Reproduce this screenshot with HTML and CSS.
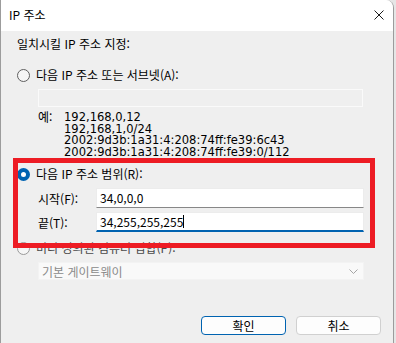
FILE: index.html
```html
<!DOCTYPE html>
<html lang="ko">
<head>
  <meta charset="UTF-8">
  <meta name="viewport" content="width=device-width, initial-scale=1.0">
  <title>IP 주소</title>
  <link rel="stylesheet" href="styles.css">
</head>
<body>
  <div class="window">
    <div class="titlebar">
      <span class="title">IP 주소</span>
      <svg class="close" width="10" height="10" viewBox="0 0 10 10">
        <path d="M0.5 0.5 L9.5 9.5 M9.5 0.5 L0.5 9.5" stroke="#1a1a1a" stroke-width="1" fill="none"/>
      </svg>
    </div>

    <div class="content">
      <div class="heading">일치시킬 IP 주소 지정:</div>

      <label class="radio-row">
        <span class="radio"></span>
        <span>다음 IP 주소 또는 서브넷(A):</span>
      </label>
      <div class="textbox disabled"></div>

      <div class="example">
        <span class="example-label">예:</span>
        <div class="example-lines">
          <div>192,168,0,12</div>
          <div>192,168,1,0/24</div>
          <div>2002:9d3b:1a31:4:208:74ff:fe39:6c43</div>
          <div>2002:9d3b:1a31:4:208:74ff:fe39:0/112</div>
        </div>
      </div>

      <label class="radio-row range-radio">
        <span class="radio checked"></span>
        <span>다음 IP 주소 범위(R):</span>
      </label>
      <div class="field-row first">
        <span class="field-label">시작(F):</span>
        <div class="input">34,0,0,0</div>
      </div>
      <div class="field-row">
        <span class="field-label">끝(T):</span>
        <div class="input focused">34,255,255,255<span class="caret"></span></div>
      </div>

      <label class="radio-row preset-radio">
        <span class="radio off"></span>
        <span class="muted">미리 정의된 컴퓨터 집합(P):</span>
      </label>
      <div class="combo">
        <span>기본 게이트웨이</span>
        <svg width="9" height="5" viewBox="0 0 9 5">
          <path d="M0.5 0.5 L4.5 4.5 L8.5 0.5" stroke="#a5a5a5" stroke-width="1" fill="none"/>
        </svg>
      </div>

      <div class="buttons">
        <button class="btn default">확인</button>
        <button class="btn">취소</button>
      </div>

      <div class="highlight"></div>
    </div>
  </div>
</body>
</html>
```

FILE: styles.css
```css
* {
  box-sizing: border-box;
  margin: 0;
  padding: 0;
}
body {
  width: 396px;
  height: 343px;
  overflow: hidden;
  background-color: #e6e6e6;
  font-family: "Noto Sans CJK KR", "Noto Sans", sans-serif;
  font-size: 12px;
  color: #000;
}
.window {
  width: 394px;
  height: 343px;
  background-color: #efefef;
  border-left: 1px solid #9c9c9c;
  border-right: 1px solid #9c9c9c;
  border-top-right-radius: 8px;
  overflow: hidden;
}
.titlebar {
  height: 31px;
  background-color: #fff;
  display: flex;
  justify-content: space-between;
  align-items: center;
  padding: 0 9px 0 8px;
}
.title {
  font-size: 12px;
  line-height: 16px;
  margin-top: -2px;
}
.close {
  margin-top: -1px;
}
.content {
  position: relative;
  height: 312px;
  padding-left: 16px;
}
.heading {
  height: 16px;
  line-height: 16px;
  margin-top: 5px;
}
.radio-row {
  display: flex;
  align-items: center;
  gap: 6px;
  height: 16px;
  line-height: 16px;
  margin-top: 15px;
}
.radio {
  width: 13px;
  height: 13px;
  border-radius: 50%;
  border: 1px solid #5f5f5f;
  background-color: #f6f6f6;
  flex-shrink: 0;
}
.radio.checked {
  border: 4px solid #0063b1;
  background-color: #fff;
}
.radio.off {
  border-color: #9a9a9a;
}
.muted {
  color: #4a4a4a;
}
.textbox {
  margin: 6px 0 0 21px;
  width: 325px;
  height: 18px;
  border: 1px solid #fafafa;
  background-color: #efefef;
}
.example {
  display: flex;
  margin: 4px 0 0 21px;
  font-family: "DejaVu Sans Condensed", "Noto Sans CJK KR", sans-serif;
  font-size: 12.8px;
  line-height: 11.7px;
  height: 46px;
}
.example-label {
  width: 26px;
  font-family: "Noto Sans CJK KR", sans-serif;
  font-size: 12px;
}
.range-radio {
  margin-top: 9px;
}
.field-row {
  display: flex;
  align-items: center;
  height: 20px;
  margin-top: 4px;
  padding-left: 21px;
}
.field-row.first {
  margin-top: 6px;
}
.field-label {
  width: 58px;
}
.input {
  width: 268px;
  height: 20px;
  background-color: #fff;
  border: 1px solid #ececec;
  border-bottom: 1px solid #878787;
  padding-left: 3px;
  line-height: 18px;
  display: flex;
  align-items: center;
}
.input.focused {
  border-bottom: 2px solid #0063b1;
}
.caret {
  width: 1px;
  height: 13px;
  background-color: #000;
}
.preset-radio {
  margin-top: 8px;
}
.combo {
  margin: 6px 0 0 21px;
  width: 326px;
  height: 18px;
  background-color: #f9f9f9;
  border: 1px solid #f3f3f3;
  color: #8a8a8a;
  display: flex;
  justify-content: space-between;
  align-items: center;
  padding: 0 5px 0 3px;
}
.buttons {
  display: flex;
  justify-content: flex-end;
  gap: 10px;
  margin-top: 36px;
  padding-right: 12px;
}
.btn {
  width: 85px;
  height: 19px;
  border: 1px solid #d0d0d0;
  border-radius: 4px;
  background-color: #fdfdfd;
  font-family: "Noto Sans CJK KR", sans-serif;
  font-size: 12px;
  line-height: 16px;
  color: #000;
}
.btn.default {
  border: 1px solid #0063b1;
}
.highlight {
  position: absolute;
  left: 12px;
  top: 122px;
  width: 362px;
  height: 90px;
  border: 5px solid #ed1c24;
}
```
